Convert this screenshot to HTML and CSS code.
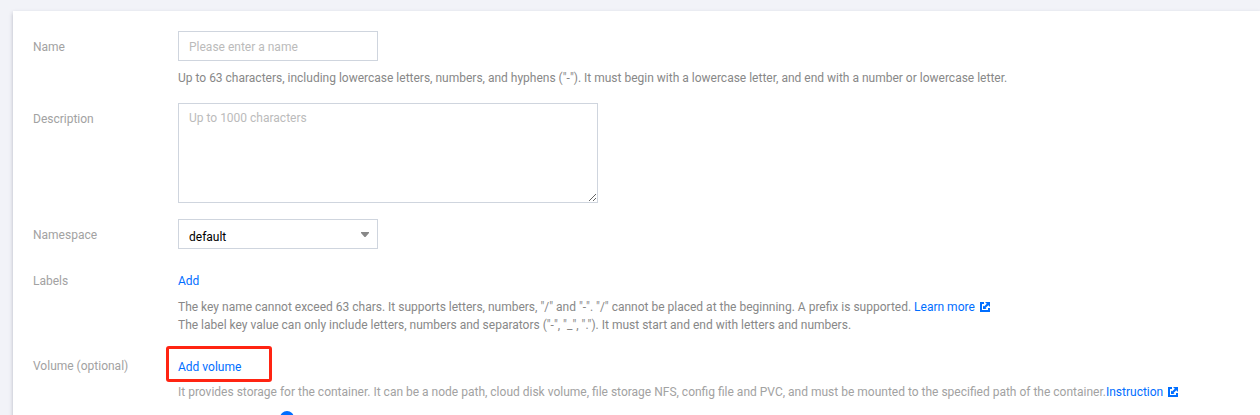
FILE: index.html
```html
<!DOCTYPE html>
<html lang="en">
<head>
<meta charset="utf-8">
<title>Create workload</title>
<link rel="stylesheet" href="styles.css">
</head>
<body>
<main class="page">
<form class="card">
  <div class="row">
    <label class="label" for="name">Name</label>
    <div class="field">
      <input class="control" id="name" type="text" placeholder="Please enter a name">
      <p class="help help-control">Up to 63 characters, including lowercase letters, numbers, and hyphens ("-"). It must begin with a lowercase letter, and end with a number or lowercase letter.</p>
    </div>
  </div>
  <div class="row">
    <label class="label" for="description">Description</label>
    <div class="field">
      <textarea class="control control-area" id="description" placeholder="Up to 1000 characters"></textarea>
    </div>
  </div>
  <div class="row">
    <label class="label" for="namespace">Namespace</label>
    <div class="field">
      <div class="select-wrap">
        <select class="control" id="namespace"><option>default</option></select>
        <svg class="caret" viewBox="0 0 8 5" aria-hidden="true"><path d="M0 0h8v1L4.500 5h-1L0 1z"/></svg>
      </div>
    </div>
  </div>
  <div class="row">
    <span class="label">Labels</span>
    <div class="field">
      <button class="action" type="button">Add</button>
      <p class="help">The key name cannot exceed 63 chars. It supports letters, numbers, "/" and "-". "/" cannot be placed at the beginning. A prefix is supported. <a class="link" href="#">Learn more<svg class="external" viewBox="0 0 10 10" aria-hidden="true"><path d="M0 0h4v2H2v6h6V6h2v4H0zM5 0h5v5L8.300 3.300 5.500 6.100 6.500 7H3V3.500l1 1L6.800 1.800z"/></svg></a></p>
      <p class="help-line">The label key value can only include letters, numbers and separators ("-", "_", "."). It must start and end with letters and numbers.</p>
    </div>
  </div>
  <div class="row">
    <span class="label">Volume (optional)</span>
    <div class="field">
      <button class="action action-marked" type="button">Add volume</button>
      <p class="help help-light">It provides storage for the container. It can be a node path, cloud disk volume, file storage NFS, config file and PVC, and must be mounted to the specified path of the container.<a class="link" href="#">Instruction<svg class="external" viewBox="0 0 10 10" aria-hidden="true"><path d="M0 0h4v2H2v6h6V6h2v4H0zM5 0h5v5L8.300 3.300 5.500 6.100 6.500 7H3V3.500l1 1L6.800 1.800z"/></svg></a></p>
      <div class="notice"><svg class="dot" viewBox="0 0 14 14" aria-hidden="true"><circle cx="7" cy="7" r="7"/></svg></div>
    </div>
  </div>
</form>
</main>
</body>
</html>
```
FILE: styles.css
```css
* { box-sizing: border-box; }
html, body { height: 100%; }
body {
  margin: 0;
  overflow: hidden;
  background: #f2f3f8;
  color: #888;
  font: 12px/18px Roboto, "Segoe UI", sans-serif;
}
.page { padding: 11px 0 0 13px; }
.card {
  display: flex;
  flex-direction: column;
  gap: 16px;
  padding: 20px;
  background: #fff;
  box-shadow: 0 2px 4px rgba(54, 58, 80, .32);
}
.row { display: flex; }
.label {
  flex: 0 0 145px;
  padding-top: 2px;
  line-height: 28px;
  color: #a2a2a2;
}
.field { flex: 1; min-width: 0; }
.control {
  display: block;
  width: 200px;
  height: 30px;
  margin: 0;
  padding: 2px 10px 0;
  border: 1px solid #cfd5de;
  border-radius: 0;
  outline: 0;
  background: #fff;
  color: #000;
  font: inherit;
  appearance: none;
}
.control::placeholder { color: #bbb; opacity: 1; }
.control-area {
  width: 420px;
  height: 100px;
  padding: 5px 10px;
  resize: both;
}
.select-wrap { position: relative; width: 200px; }
select.control { padding-top: 6px; }
.caret {
  position: absolute;
  top: 13px;
  right: 9px;
  width: 8px;
  height: 5px;
  fill: #888;
}
.help, .help-line { margin: 0; white-space: nowrap; }
.help { margin-top: 3px; }
.help-control { margin-top: 8px; }
.help-light { color: #a2a2a2; }
.link { color: #006eff; text-decoration: none; }
.external {
  width: 10px;
  height: 10px;
  margin-left: 5px;
  vertical-align: -1px;
  fill: #006eff;
}
.action {
  display: block;
  height: 30px;
  padding: 2px 0 0;
  border: 0;
  background: none;
  color: #006eff;
  font: inherit;
  cursor: pointer;
}
.action-marked { position: relative; padding-top: 4px; }
.action-marked::after {
  content: "";
  position: absolute;
  inset: -4px -31px -2px -12px;
  border: 3px solid #ff2412;
  border-radius: 3px;
}
.notice { padding: 10px 0 0 102px; }
.dot { display: block; width: 14px; height: 14px; fill: #006eff; }
```
